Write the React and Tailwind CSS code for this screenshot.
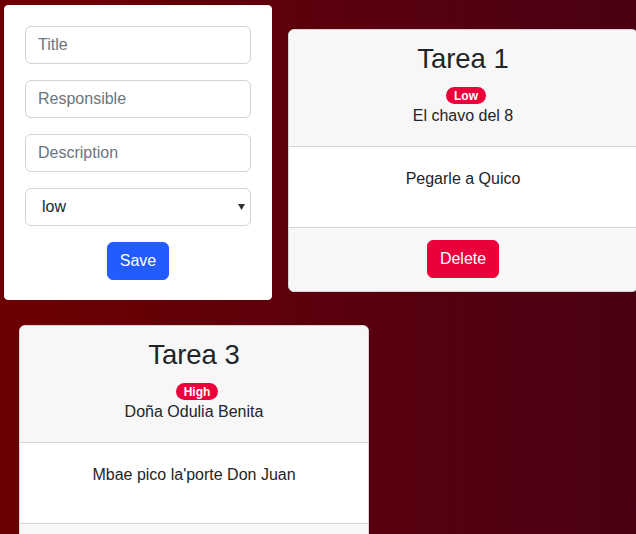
import React, { useState } from 'react';

const tasks = [
  { id: 1, title: 'Tarea 1', priority: 'Low', responsible: 'El chavo del 8', description: 'Pegarle a Quico' },
  { id: 3, title: 'Tarea 3', priority: 'High', responsible: 'Doña Odulia Benita', description: "Mbae pico la'porte Don Juan" },
];

function TaskForm() {
  const [priority, setPriority] = useState('low');

  return (
    <form
      className="w-[268px] shrink-0 bg-white rounded-[4px] px-5 pt-5 pb-[19px] border border-white flex flex-col gap-4"
      onSubmit={(e) => e.preventDefault()}
    >
      <input
        type="text"
        placeholder="Title"
        className="h-[38px] w-full rounded-[6px] border border-[#ced4da] px-3 text-base text-[#212529] placeholder:text-[#6c757d] outline-none"
      />
      <input
        type="text"
        placeholder="Responsible"
        className="h-[38px] w-full rounded-[6px] border border-[#ced4da] px-3 text-base text-[#212529] placeholder:text-[#6c757d] outline-none"
      />
      <input
        type="text"
        placeholder="Description"
        className="h-[38px] w-full rounded-[6px] border border-[#ced4da] px-3 text-base text-[#212529] placeholder:text-[#6c757d] outline-none"
      />
      <div className="relative">
        <select
          value={priority}
          onChange={(e) => setPriority(e.target.value)}
          className="h-[38px] w-full appearance-none rounded-[6px] border border-[#ced4da] bg-white pl-4 pr-8 text-base text-[#212529] outline-none"
        >
          <option value="low">low</option>
          <option value="medium">medium</option>
          <option value="high">high</option>
        </select>
        <svg className="pointer-events-none absolute right-[6px] top-[16px] w-[7px] h-[6px]" viewBox="0 0 7 6">
          <path d="M0 0h7L3.5 6z" fill="#333" />
        </svg>
      </div>
      <div className="flex justify-center">
        <button
          type="submit"
          className="h-[38px] rounded-[6px] border border-[#225cff] bg-[#225cff] px-3 text-base text-white"
        >
          Save
        </button>
      </div>
    </form>
  );
}

function TaskCard({ task, className }) {
  return (
    <div className={`w-[350px] shrink-0 rounded-[6px] border border-[#d4d4d4] bg-white overflow-hidden text-center text-[#212529] ${className}`}>
      {/* Header */}
      <div className="bg-[#f7f7f7] border-b border-[#d4d4d4] pt-[13px] pb-[18px] flex flex-col items-center">
        <h2 className="text-[27.5px] leading-[32px] font-normal">{task.title}</h2>
        <span className="mt-3 ml-[6px] h-[17px] flex items-center rounded-full bg-[#ec003c] px-[8px] text-[12px] leading-none font-bold text-white">
          {task.priority}
        </span>
        <p className="text-base leading-6">{task.responsible}</p>
      </div>

      {/* Body */}
      <div className="pt-5 pb-[36px] px-4">
        <p className="text-base leading-6">{task.description}</p>
      </div>

      {/* Footer */}
      <div className="bg-[#f7f7f7] border-t border-[#d4d4d4] pt-3 pb-[13px] flex justify-center">
        <button className="h-[38px] rounded-[6px] border border-[#ec003c] bg-[#ec003c] px-3 text-base text-white">
          Delete
        </button>
      </div>
    </div>
  );
}

export default function App() {
  return (
    <div className="min-h-screen w-full overflow-hidden bg-gradient-to-r from-[#6c0000] to-[#4a0012] font-['Liberation_Sans',Arial,sans-serif]">
      <div className="flex items-start">
        <div className="ml-[4px] mt-[5px]">
          <TaskForm />
        </div>
        <TaskCard task={tasks[0]} className="ml-4 mt-[29px]" />
      </div>
      <TaskCard task={tasks[1]} className="ml-[19px] mt-[25px]" />
    </div>
  );
}
